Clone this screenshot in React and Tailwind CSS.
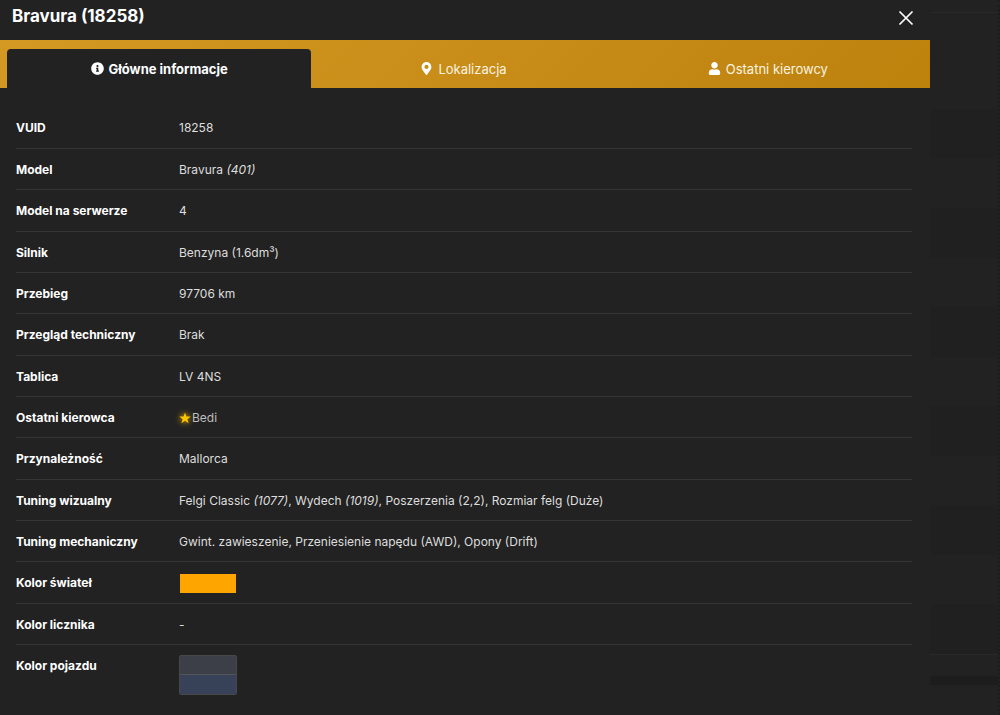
import React, { useState } from 'react';
import { FaInfoCircle, FaMapMarkerAlt, FaUser } from 'react-icons/fa';

const tabs = [
  { id: 'info', label: 'Główne informacje', icon: FaInfoCircle },
  { id: 'location', label: 'Lokalizacja', icon: FaMapMarkerAlt },
  { id: 'drivers', label: 'Ostatni kierowcy', icon: FaUser },
];

const Star = () => (
  <svg viewBox="0 0 24 24" className="size-3 text-[#ffc400] drop-shadow-[0_0_3px_#ffc400]" fill="currentColor" aria-hidden="true">
    <path d="M12 1l2.9 8h8.6l-6.8 5.3 2.5 8.2-7.2-4.9-7.2 4.9 2.5-8.2L.5 9h8.6z" />
  </svg>
);

const rows = [
  { label: 'VUID', value: '18258' },
  { label: 'Model', value: <>Bravura <em>(401)</em></> },
  { label: 'Model na serwerze', value: '4' },
  { label: 'Silnik', value: 'Benzyna (1.6dm³)' },
  { label: 'Przebieg', value: '97706 km' },
  { label: 'Przegląd techniczny', value: 'Brak' },
  { label: 'Tablica', value: 'LV 4NS' },
  {
    label: 'Ostatni kierowca',
    value: (
      <a href="#bedi" className="flex items-center gap-px text-[#bdbdbd]">
        <Star />
        Bedi
      </a>
    ),
  },
  { label: 'Przynależność', value: 'Mallorca' },
  {
    label: 'Tuning wizualny',
    value: <>Felgi Classic <em>(1077)</em>, Wydech <em>(1019)</em>, Poszerzenia (2,2), Rozmiar felg (Duże)</>,
  },
  { label: 'Tuning mechaniczny', value: 'Gwint. zawieszenie, Przeniesienie napędu (AWD), Opony (Drift)' },
  { label: 'Kolor świateł', value: <div className="ml-px h-[19px] w-14 bg-[#ffa500]" /> },
  { label: 'Kolor licznika', value: '-' },
];

// Table of vehicles that stays visible behind the dialog
const Backdrop = () => (
  <div className="flex flex-1 flex-col border-r-2 border-dotted border-[#1c1c1c] bg-[#222222] pt-3" aria-hidden="true">
    <div className="h-12 border-t border-[#292929]" />
    {Array.from({ length: 12 }).map((_, i) => (
      <div key={i} className="odd:bg-[#202020] even:h-[49px] odd:h-[50px]" />
    ))}
    <div className="h-[22px] border-t border-[#292929]" />
    <div className="h-[9px] bg-[#1d1d1d]" />
  </div>
);

const App = () => {
  const [active, setActive] = useState('info');

  return (
    <div className="flex min-h-screen bg-[#222222] font-['Inter',sans-serif] text-xs leading-4 text-[#dedede]">
      <main className="w-[93%] bg-[#222222]">
        <header className="flex h-10 items-start justify-between pt-1 pr-[15px] pl-3">
          <h1 className="text-[17px] leading-6 font-bold text-white">Bravura (18258)</h1>
          <button type="button" aria-label="Zamknij" className="mt-[5px] p-px text-white">
            <svg viewBox="0 0 16 16" className="size-4" fill="none" stroke="currentColor" strokeWidth="1.7">
              <path d="M1.5 1.5l13 13M14.5 1.5l-13 13" />
            </svg>
          </button>
        </header>

        <div role="tablist" className="flex h-12 items-end bg-linear-135 from-[#d39922] to-[#bc820c] pr-[10px] pl-[7px]">
          {tabs.map(({ id, label, icon: Icon }) => (
            <button
              key={id}
              type="button"
              role="tab"
              aria-selected={active === id}
              onClick={() => setActive(id)}
              className={`flex h-[39px] flex-1 items-center justify-center gap-[5px] rounded-t text-[13px] ${
                active === id ? 'bg-[#222222] font-bold text-white' : 'text-[#fbf3e0]'
              }`}
            >
              <Icon className="size-[13px] text-white" />
              {label}
            </button>
          ))}
        </div>

        <section className="pt-[19px] pr-[18px] pb-4 pl-4">
          <table className="w-full table-fixed text-left">
            <tbody>
              {rows.map((row) => (
                <tr key={row.label} className="h-[41px] border-b border-[#353535] nth-[3n]:h-[42px]">
                  <th scope="row" className="w-[163px] pt-0.5 font-bold text-white">{row.label}</th>
                  <td className="pt-0.5">{row.value}</td>
                </tr>
              ))}
              <tr className="align-top">
                <th scope="row" className="pt-[13px] font-bold text-white">Kolor pojazdu</th>
                <td className="pt-[10px]">
                  <div className="w-[58px] divide-y divide-[#555555] overflow-hidden rounded-xs border border-[#484848]">
                    <div className="h-[19px] bg-[#3c3f47]" />
                    <div className="h-[19px] bg-[#374157]" />
                  </div>
                </td>
              </tr>
            </tbody>
          </table>
        </section>
      </main>
      <Backdrop />
    </div>
  );
};

export default App;
